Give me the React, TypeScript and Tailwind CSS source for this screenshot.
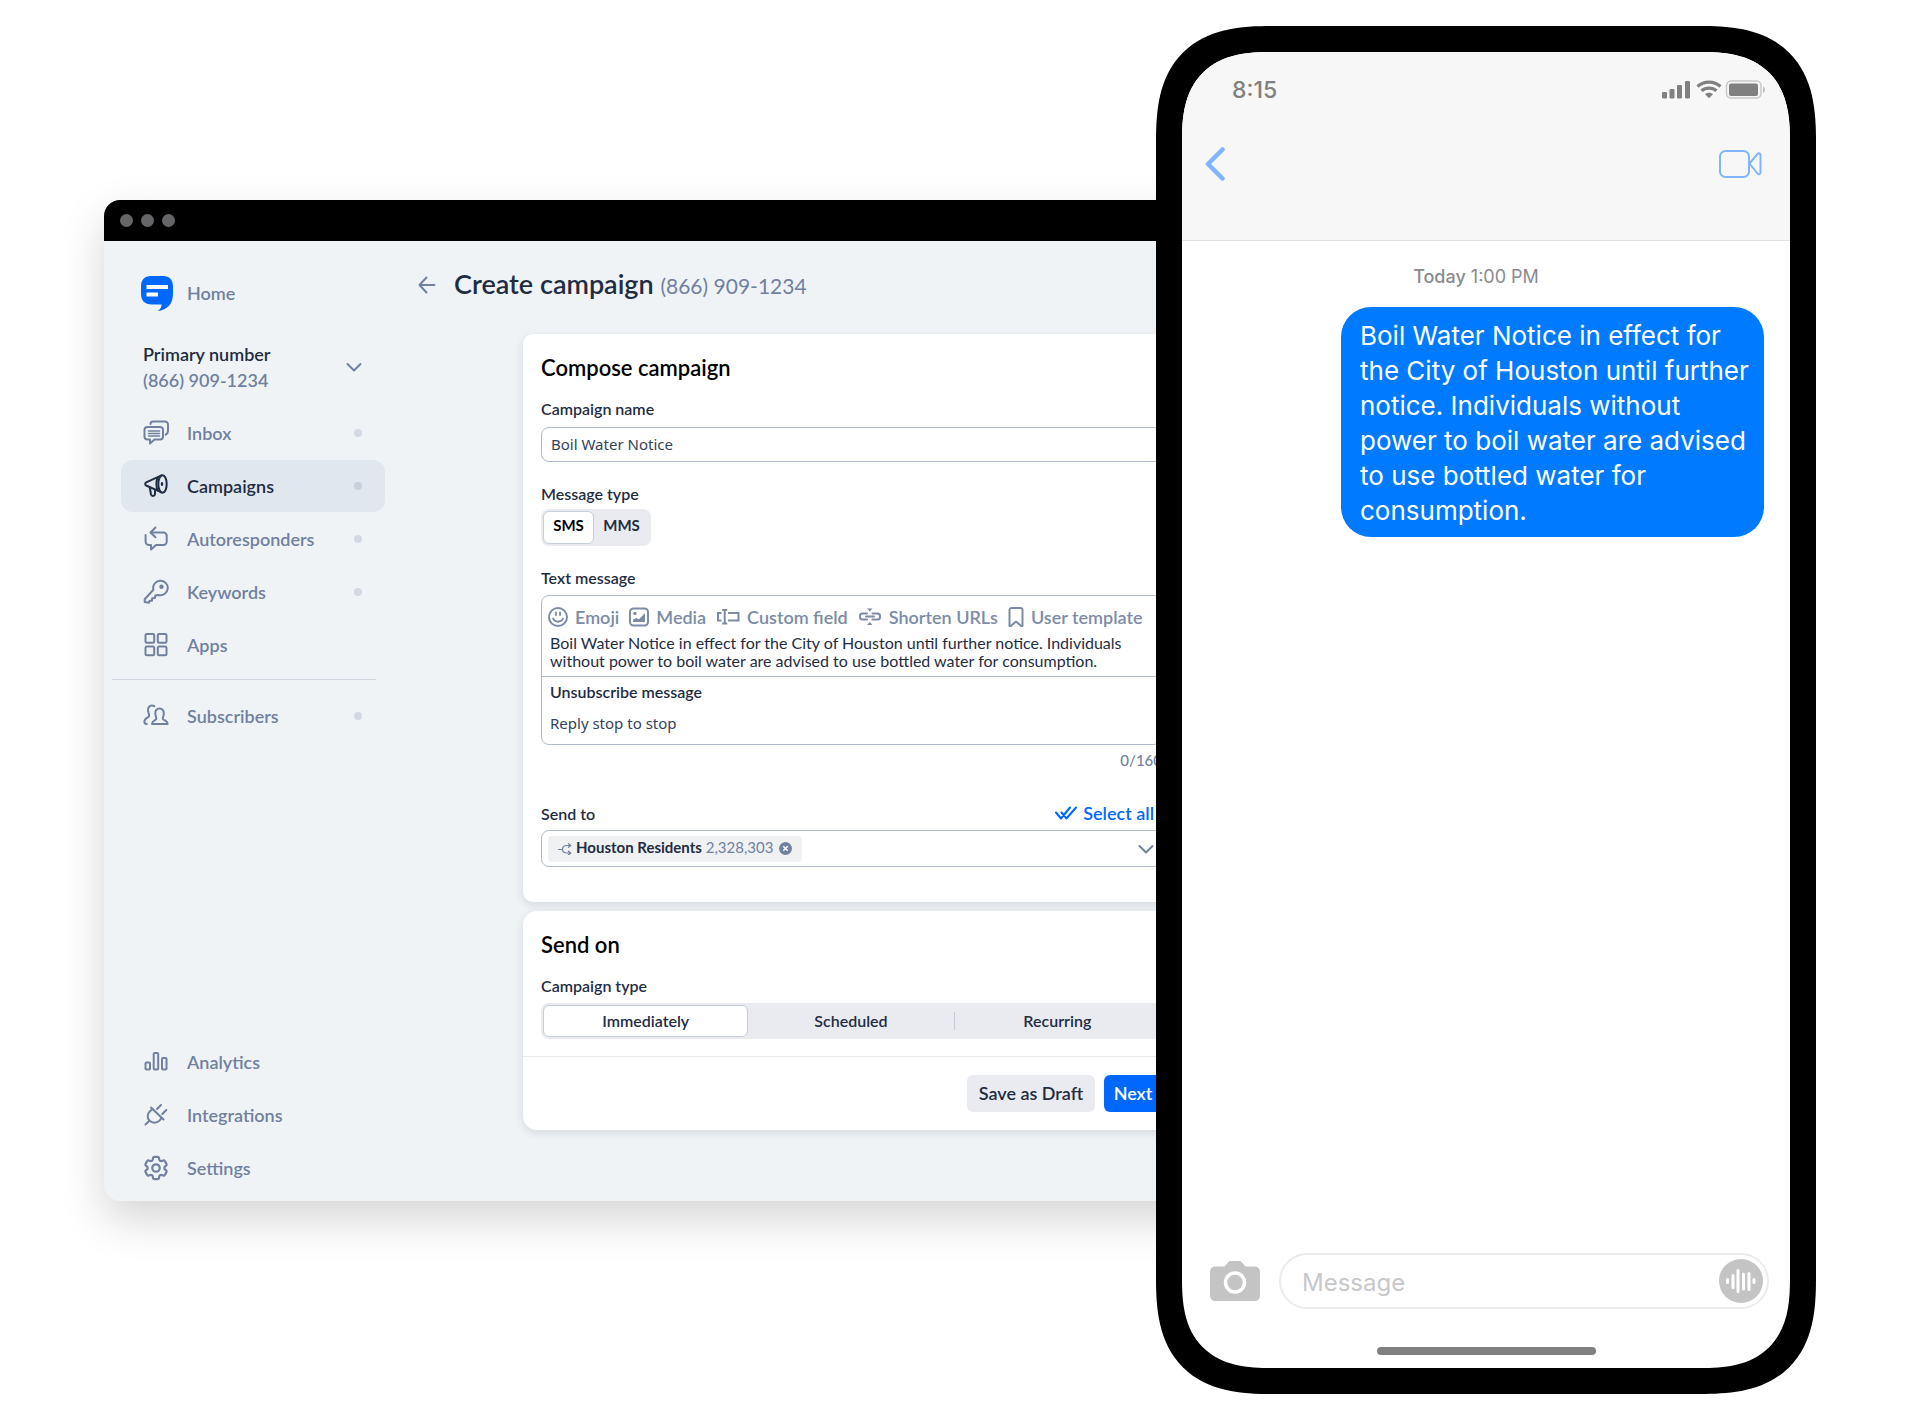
import React, { useState } from 'react';
import { HiOutlineCog6Tooth } from 'react-icons/hi2';

interface IconProps {
    className?: string;
}

interface NavItem {
    label: string;
    icon: React.FC<IconProps>;
    dot?: boolean;
    active?: boolean;
}

const strokeProps = {
    fill: 'none',
    stroke: 'currentColor',
    strokeWidth: 2,
    strokeLinecap: 'round' as const,
    strokeLinejoin: 'round' as const,
};

const LogoIcon: React.FC<IconProps> = ({ className }) => (
    <svg className={className} viewBox="0 0 32 35">
        <path fill="#0068ff" d="M10 0h12c6.500 0 10 3.800 10 10.500v7C32 28 26.500 34 16.500 35c2.800-1.600 4-3.600 4-6.500H11C3.500 28.500 0 24.500 0 17.500v-7C0 3.800 3.500 0 10 0z" />
        <path fill="#fff" d="M5.500 9h21.500v4H5.500zM5.500 16.500h11.500v4H5.500z" />
    </svg>
);

const InboxIcon: React.FC<IconProps> = ({ className }) => (
    <svg className={className} viewBox="0 0 26 26" {...strokeProps}>
        <path d="M7.500 4C7.500 2.500 8.500 1.500 10 1.500h12a3 3 0 0 1 3 3V11c0 1.800-.8 2.800-2.300 3.600" />
        <path d="M4.500 7h12.500a3 3 0 0 1 3 3v6.500a3 3 0 0 1-3 3h-5.500l-4.500 4v-4H4.500a3 3 0 0 1-3-3V10a3 3 0 0 1 3-3z" />
        <path strokeWidth={1.500} d="M5.500 11h11M5.500 13.500h11M5.500 16h11" />
    </svg>
);

const MegaphoneIcon: React.FC<IconProps> = ({ className }) => (
    <svg className={className} viewBox="0 0 26 26" {...strokeProps}>
        <ellipse cx="19.500" cy="11" rx="4.200" ry="8.800" />
        <circle cx="19" cy="11" r="1.300" fill="currentColor" stroke="none" />
        <path d="M19 10v2M18.500 2.300L3.200 9.300c-1.300.7-1.300 2.500 0 3.200l15.300 6.800M14.500 4.800c-1.300 3.600-1.300 8.500 0 12" />
        <path d="M6.800 14.500l1.200 7c.6 2 3.800 1.800 4-.3v-4.400" />
    </svg>
);

const ReplyIcon: React.FC<IconProps> = ({ className }) => (
    <svg className={className} viewBox="0 0 26 26" {...strokeProps}>
        <path d="M12.500 1.500L7.500 6.500l5 4.700" />
        <path d="M8 6.500h12.500a3.200 3.200 0 0 1 3.200 3.200v6a3.200 3.200 0 0 1-3.200 3.200H13L8 23.500v-4.600H5.800a3.200 3.200 0 0 1-3.200-3.200V9" />
    </svg>
);

const KeyIcon: React.FC<IconProps> = ({ className }) => (
    <svg className={className} viewBox="0 0 26 26" {...strokeProps}>
        <path d="M10.400 10.800A7.300 7.300 0 1 1 15.500 16l-3.200.4-.3 2.600-2.800.2-.3 2.600H6.600L6 23.700 1.700 23v-2.700z" />
        <circle cx="18.500" cy="7.800" r="2.200" fill="currentColor" stroke="none" />
    </svg>
);

const AppsIcon: React.FC<IconProps> = ({ className }) => (
    <svg className={className} viewBox="0 0 26 26" {...strokeProps}>
        <rect x="2.500" y="2" width="8.700" height="8.700" rx="1.300" />
        <rect x="14.800" y="2" width="8.700" height="8.700" rx="1.300" />
        <rect x="2.500" y="14.500" width="8.700" height="8.700" rx="1.300" />
        <rect x="14.800" y="14.500" width="8.700" height="8.700" rx="1.300" />
    </svg>
);

const PeopleIcon: React.FC<IconProps> = ({ className }) => (
    <svg className={className} viewBox="0 0 26 26" {...strokeProps}>
        <path d="M16.500 5.500c-2.900 0-4.300 2.200-4.200 4.900.1 2.600 1.400 4 .9 5.600-.4 1.400-3.800 1-4.200 4.900h15.600c-.4-3.900-4.300-3.500-4.700-4.900-.4-1.600.9-3 .9-5.600 0-2.700-1.400-4.900-4.300-4.900z" />
        <path d="M11.300 3.200C8.500 1.500 5.100 2.800 5 6.800c-.1 2.700 1.300 4 1.100 6-.2 2.300-4.700 1.600-4.700 6 0 1.500.8 2.200 2.400 2.200" />
    </svg>
);

const AnalyticsIcon: React.FC<IconProps> = ({ className }) => (
    <svg className={className} viewBox="0 0 26 26" {...strokeProps}>
        <rect x="2.500" y="13.500" width="4.500" height="7" rx="1" />
        <rect x="10.700" y="4" width="4.500" height="16.500" rx="1" />
        <rect x="19" y="9" width="4.500" height="11.500" rx="1" />
    </svg>
);

const PlugIcon: React.FC<IconProps> = ({ className }) => (
    <svg className={className} viewBox="0 0 26 26" {...strokeProps}>
        <path d="M2.500 22.500l3.800-3.700M8 5.500l12.500 12M14 7l4-4M19.300 12l4-4" />
        <path d="M9.500 7L7 9.200c-3 2.700-3 6.800-.5 9.400 2.700 2.700 7.200 2.900 10 0l2-2.500" />
    </svg>
);

const GearIcon: React.FC<IconProps> = ({ className }) => <HiOutlineCog6Tooth className={className} strokeWidth={1.8} viewBox="1.500 1.500 21 21" />;

const ChevronDown: React.FC<IconProps> = ({ className }) => (
    <svg className={className} viewBox="0 0 16 16" {...strokeProps}>
        <path d="M1.500 5l6.500 6.500L14.500 5" />
    </svg>
);

const EmojiIcon: React.FC<IconProps> = ({ className }) => (
    <svg className={className} viewBox="0 0 20 20" {...strokeProps}>
        <circle cx="10" cy="10" r="9" />
        <path d="M8 5.500V8M12 5.500V8M5 11.500c1.800 4.300 8.200 4.300 10 0" strokeWidth={1.800} />
    </svg>
);

const MediaIcon: React.FC<IconProps> = ({ className }) => (
    <svg className={className} viewBox="0 0 20 20" {...strokeProps}>
        <rect x="1" y="1.500" width="18" height="17" rx="3.500" />
        <circle cx="6" cy="6.500" r="1.700" fill="currentColor" stroke="none" />
        <path d="M4 15v-2.200l3-1.800 3 1.200L16 6v9z" fill="currentColor" stroke="none" />
    </svg>
);

const FieldIcon: React.FC<IconProps> = ({ className }) => (
    <svg className={className} viewBox="0 0 24 20" {...strokeProps} strokeLinecap="butt" strokeLinejoin="miter">
        <path d="M5.500 6H2v7.500h3.500M12 6h10.500v7.500H12M6.200 3h5M6.200 16.500h5M8.700 3v13.500" />
    </svg>
);

const ShortenIcon: React.FC<IconProps> = ({ className }) => (
    <svg className={className} viewBox="0 0 24 20" {...strokeProps}>
        <path d="M9 6.500H4.500a2.500 2.500 0 0 0-2.500 2.500v1a2.500 2.500 0 0 0 2.500 2.500H9M14.500 6.500h5A2.500 2.500 0 0 1 22 9v1a2.500 2.500 0 0 1-2.500 2.500h-5M8 9.500h8" />
        <path d="M9 1.500h5.500l-2.700 3zM9 18h5.500l-2.700-3z" fill="currentColor" stroke="none" />
    </svg>
);

const BookmarkIcon: React.FC<IconProps> = ({ className }) => (
    <svg className={className} viewBox="0 0 16 20" {...strokeProps}>
        <path d="M1.500 3a2 2 0 0 1 2-2h9a2 2 0 0 1 2 2v16h-1.300L8 14.500 2.800 19H1.500z" />
    </svg>
);

const primaryNav: NavItem[] = [
    { label: 'Inbox', icon: InboxIcon, dot: true },
    { label: 'Campaigns', icon: MegaphoneIcon, dot: true, active: true },
    { label: 'Autoresponders', icon: ReplyIcon, dot: true },
    { label: 'Keywords', icon: KeyIcon, dot: true },
    { label: 'Apps', icon: AppsIcon },
];

const secondaryNav: NavItem[] = [{ label: 'Subscribers', icon: PeopleIcon, dot: true }];

const bottomNav: NavItem[] = [
    { label: 'Analytics', icon: AnalyticsIcon },
    { label: 'Integrations', icon: PlugIcon },
    { label: 'Settings', icon: GearIcon },
];

const tools = [
    { label: 'Emoji', icon: <EmojiIcon className="w-5 h-5" /> },
    { label: 'Media', icon: <MediaIcon className="w-5 h-5" /> },
    { label: 'Custom field', icon: <FieldIcon className="w-6 h-5" /> },
    { label: 'Shorten URLs', icon: <ShortenIcon className="w-6 h-5" /> },
    { label: 'User template', icon: <BookmarkIcon className="w-4 h-5" /> },
];

const NavList: React.FC<{ items: NavItem[] }> = ({ items }) => (
    <ul className="flex flex-col gap-px">
        {items.map(({ label, icon: Icon, dot, active }) => (
            <li key={label}>
                <a
                    href="#"
                    className={`flex items-center h-[52px] rounded-xl pl-[22px] pr-[23px] text-[18px] font-semibold ${active ? 'bg-[#e0e7ee] text-[#1f2d43]' : 'text-[#70819f]'}`}
                >
                    <Icon className="w-[26px] h-[26px] mr-[18px] shrink-0" />
                    <span className="flex-1">{label}</span>
                    {dot && <span className={`w-2 h-2 rounded-full ${active ? 'bg-[#c8d0dc]' : 'bg-[#d3d9e3]'}`} />}
                </a>
            </li>
        ))}
    </ul>
);

const Sidebar: React.FC = () => (
    <nav className="w-[296px] shrink-0 flex flex-col pl-[17px] pr-[15px] pt-[34px] pb-[7px]">
        <a href="#" className="flex items-center h-9 pl-5 gap-[14px] text-[18px] font-semibold text-[#70819f]">
            <LogoIcon className="w-8 h-[35px]" />
            Home
        </a>
        <button className="flex items-center justify-between text-left mt-[30px] mb-[14px] pl-[22px] pr-[23px] text-[18px] leading-[26px] font-semibold">
            <span>
                <span className="block text-[#1f2d43]">Primary number</span>
                <span className="block text-[#70819f]">(866) 909-1234</span>
            </span>
            <ChevronDown className="w-4 h-4 text-[#70819f]" />
        </button>
        <NavList items={primaryNav} />
        <hr className="mt-2 mb-[10px] -ml-[9px] mr-[9px] border-[#d0d6df]" />
        <NavList items={secondaryNav} />
        <div className="mt-auto">
            <NavList items={bottomNav} />
        </div>
    </nav>
);

const labelClass = 'block text-[16px] leading-5 font-semibold text-[#1f2d43]';

const ComposeCard: React.FC = () => {
    const [type, setType] = useState('SMS');

    return (
        <section className="bg-white rounded-[10px] px-[18px] pt-5 pb-[35px] shadow-[0_3px_8px_rgba(31,45,67,0.12)]">
            <h2 className="text-[22px] leading-7 font-semibold text-black">Compose campaign</h2>

            <label htmlFor="name" className={`mt-[17px] ${labelClass}`}>Campaign name</label>
            <input
                id="name"
                defaultValue="Boil Water Notice"
                className="block w-full h-[35px] mt-2 px-[9px] pb-0.5 rounded-lg border border-[#b0bccd] font-['Noto_Sans',sans-serif] text-[15px] text-[#34435a]"
            />

            <p className={`mt-[22px] ${labelClass}`}>Message type</p>
            <div className="inline-flex mt-[5px] p-0.5 h-[37px] rounded-lg bg-[#eaebf0] align-top">
                {['SMS', 'MMS'].map((item) => (
                    <button
                        key={item}
                        aria-pressed={type === item}
                        onClick={() => setType(item)}
                        className={`px-2 pb-1 rounded-md text-[15px] font-bold ${type === item ? 'w-[51px] bg-white border border-[#c5cedb] text-black' : 'w-[55px] text-[#1f2d43]'}`}
                    >
                        {item}
                    </button>
                ))}
            </div>

            <label htmlFor="message" className={`mt-[22px] ${labelClass}`}>Text message</label>
            <div className="mt-[7px] rounded-lg border border-[#b0bccd]">
                <div className="flex items-center gap-[10px] h-6 mt-[9px] px-1.5">
                    {tools.map(({ label, icon }) => (
                        <button key={label} className="flex items-center gap-[7px] whitespace-nowrap text-[18px] font-semibold text-[#7c8ba6]">
                            {icon}
                            {label}
                        </button>
                    ))}
                </div>
                <textarea
                    id="message"
                    rows={2}
                    defaultValue="Boil Water Notice in effect for the City of Houston until further notice. Individuals without power to boil water are advised to use bottled water for consumption."
                    className="block w-full mt-[5px] pl-2 pr-6 resize-none overflow-hidden text-[16px] leading-[18px] text-[#1f2d43]"
                />
                <div className="mt-[6px] pt-[5px] pb-[10px] px-2 border-t border-[#b0bccd]">
                    <label htmlFor="unsubscribe" className={labelClass}>Unsubscribe message</label>
                    <input
                        id="unsubscribe"
                        defaultValue="Reply stop to stop"
                        className="block w-full h-5 mt-3 pb-0.5 font-['Noto_Sans',sans-serif] text-[15px] text-[#34435a]"
                    />
                </div>
            </div>
            <p className="mt-[5px] text-right text-[15px] leading-5 font-medium text-[#70819f]">0/160</p>

            <div className="flex items-center justify-between mt-[34px] pr-2">
                <span className={labelClass}>Send to</span>
                <button className="flex items-center gap-1.5 h-5 pb-0.5 text-[18px] font-semibold text-[#0068ff]">
                    <svg className="w-[22px] h-[14px]" viewBox="0 0 22 14" {...strokeProps}>
                        <path d="M1 6.500l5 6L15 1.500M6.500 6.500l5 6L21 1.500" />
                    </svg>
                    Select all
                </button>
            </div>
            <div className="flex items-center h-[37px] mt-1.5 pl-1.5 pr-[7px] rounded-lg border border-[#b0bccd]">
                <span className="flex items-center h-[26px] px-[10px] rounded bg-[#f0f1f3] text-[15px] text-[#70819f]">
                    <svg className="w-[14px] h-3 mr-1" viewBox="0 0 14 12" fill="none" stroke="currentColor" strokeWidth={1.200} strokeLinecap="round">
                        <path d="M.5 6.500h4M12.500 2.500H9c-3 0-4.500 1.500-4.500 4S6 10 9 10h3.500M10.500.7l2.200 1.800-2.200 1.800M10.500 8.200l2.200 1.800-2.200 1.800" />
                    </svg>
                    <span className="pb-[3px]">
                        <b className="font-bold text-[#1f2d43]">Houston Residents</b> 2,328,303
                    </span>
                    <button aria-label="Remove Houston Residents" className="ml-1.5">
                        <svg className="w-[13px] h-[13px]" viewBox="0 0 13 13">
                            <circle cx="6.500" cy="6.500" r="6.500" fill="currentColor" />
                            <path d="M4.300 4.300l4.400 4.400M8.700 4.300L4.300 8.700" stroke="#fff" strokeWidth={1.600} />
                        </svg>
                    </button>
                </span>
                <button aria-label="Choose recipients" className="ml-auto text-[#70819f]">
                    <ChevronDown className="w-4 h-4" />
                </button>
            </div>
        </section>
    );
};

const SendCard: React.FC = () => {
    const [active, setActive] = useState('Immediately');

    return (
        <section className="bg-white rounded-[14px] pt-5 shadow-[0_3px_8px_rgba(31,45,67,0.12)]">
            <div className="px-[18px]">
                <h2 className="text-[22px] leading-7 font-semibold text-black">Send on</h2>
                <p className={`mt-[17px] ${labelClass}`}>Campaign type</p>
                <div className="flex items-center mt-[7px] h-9 p-0.5 rounded-lg bg-[#eaebf0]">
                    {['Immediately', 'Scheduled', 'Recurring'].map((item) => (
                        <React.Fragment key={item}>
                            {item === 'Recurring' && <span className="w-px h-[18px] bg-[#c5cad6]" />}
                            <button
                                aria-pressed={active === item}
                                onClick={() => setActive(item)}
                                className={`flex-1 h-8 rounded-md text-[16px] font-semibold text-[#1f2d43] border ${active === item ? 'bg-white border-[#c5cedb]' : 'border-transparent'}`}
                            >
                                {item}
                            </button>
                        </React.Fragment>
                    ))}
                </div>
            </div>
            <div className="flex justify-end gap-[9px] mt-[17px] px-[18px] py-[18px] border-t border-[#e6e9ee] text-[18px] font-semibold">
                <button className="w-[128px] h-[37px] rounded-md bg-[#eaebf0] text-[#1f2d43]">Save as Draft</button>
                <button className="w-[58px] h-[37px] rounded-md bg-[#0068ff] text-white">Next</button>
            </div>
        </section>
    );
};

const BrowserWindow: React.FC = () => (
    <div className="flex-1 min-w-0 mt-[174px] rounded-2xl overflow-hidden bg-[#eff3f6] font-[Lato,sans-serif] shadow-[0_18px_44px_rgba(0,0,0,0.17)]">
        <div className="flex items-center gap-2 h-[41px] pl-4 bg-black">
            <span className="w-[13px] h-[13px] rounded-full bg-[#666668]" />
            <span className="w-[13px] h-[13px] rounded-full bg-[#666668]" />
            <span className="w-[13px] h-[13px] rounded-full bg-[#666668]" />
        </div>
        <div className="flex">
            <Sidebar />
            <main className="flex-1 min-w-0 pt-7 pb-[71px]">
                <header className="flex items-center h-8 pl-[18px]">
                    <button aria-label="Back" className="mr-[18px] text-[#70819f]">
                        <svg className="w-[18px] h-[18px]" viewBox="0 0 18 18" {...strokeProps}>
                            <path d="M8.500 1.500L1.500 9l7 7.500M2 9h14.500" />
                        </svg>
                    </button>
                    <h1 className="text-[27px] leading-8 font-semibold text-[#1f2d43]">
                        Create campaign <span className="text-[21px] font-normal text-[#70819f]">(866) 909-1234</span>
                    </h1>
                </header>
                <div className="flex flex-col gap-[9px] mt-[33px] mx-[123px]">
                    <ComposeCard />
                    <SendCard />
                </div>
            </main>
        </div>
    </div>
);

const StatusIcons: React.FC = () => (
    <svg className="w-[104px] h-5" viewBox="0 0 104 20" fill="#808080">
        <rect x="0" y="12" width="5" height="6.500" rx="1.300" />
        <rect x="7.500" y="9" width="5" height="9.500" rx="1.300" />
        <rect x="15" y="5" width="5" height="13.500" rx="1.300" />
        <rect x="23" y="1" width="5" height="17.500" rx="1.300" />
        <g fill="none" stroke="#808080" strokeWidth="3.200">
            <path d="M35.500 6.500c6.500-5.800 16.500-5.800 23 0" />
            <path d="M39.500 10.800c4.300-3.700 10.700-3.700 15 0" />
        </g>
        <path d="M43 14.300c2.400-2 5.600-2 8 0l-4 4z" />
        <rect x="64.500" y="1" width="34.500" height="17" rx="4.500" fill="none" stroke="#c9c9c9" strokeWidth="1.500" />
        <rect x="67" y="3.500" width="29" height="12.500" rx="2" />
        <path d="M101 6.500c2.700 1 2.700 5.500 0 6.500z" fill="#c0c0c0" />
    </svg>
);

const Phone: React.FC = () => (
    <div className="relative z-10 shrink-0 w-[660px] min-h-[1368px] -ml-[147px] p-[26px] flex bg-black rounded-[116px] [corner-shape:superellipse(1.4)] font-[Inter,sans-serif]">
        <div className="flex-1 flex flex-col bg-white overflow-hidden rounded-[90px] [corner-shape:superellipse(1.4)]">
            <header className="h-[189px] bg-[#f7f7f7] border-b border-[#e0e0e0]">
                <div className="flex items-center justify-between pt-[22px] pl-[50px] pr-6">
                    <span className="text-[23px] leading-8 font-medium text-[#808080]">8:15</span>
                    <StatusIcons />
                </div>
                <div className="flex items-center justify-between h-[34px] mt-[41px] pl-[23px] pr-7 text-[#7fb5ff]">
                    <button aria-label="Back">
                        <svg className="w-5 h-[34px]" viewBox="0 0 20 34" {...strokeProps} strokeWidth={4.500}>
                            <path d="M17.500 2.500L3 17l14.500 14.500" />
                        </svg>
                    </button>
                    <button aria-label="Video call">
                        <svg className="w-[43px] h-7" viewBox="0 0 43 28" {...strokeProps}>
                            <rect x="1" y="1" width="29" height="26" rx="5.500" />
                            <path d="M30.500 13.500l8-9.500c1.300-1.200 3-.5 3 1v17.500c0 1.500-1.700 2.300-3 1z" />
                        </svg>
                    </button>
                </div>
            </header>

            <div className="flex-1 px-[26px] pt-[23px]">
                <p className="pr-6 pl-1 text-center text-[18px] leading-[26px] text-[#8a8a8e]">
                    <span className="font-medium">Today</span> 1:00 PM
                </p>
                <p className="w-[423px] mt-[17px] ml-auto pl-[19px] pr-3 pt-[11px] pb-[9px] rounded-[30px] bg-[#007aff] text-white text-[26px] leading-[35px]">
                    Boil Water Notice in effect for the City of Houston until further notice. Individuals without power to boil water are advised to use bottled water for consumption.
                </p>
            </div>

            <footer className="px-[21px] pb-[13px]">
                <div className="flex items-center pl-[7px]">
                    <button aria-label="Camera">
                        <svg className="w-[50px] h-10" viewBox="0 0 50 40">
                            <path fill="#c4c4c4" d="M6 5.500h8.500l3.500-4C19 .3 20 0 21.500 0h7c1.500 0 2.500.3 3.500 1.500l3.500 4H44c4 0 6 2 6 6V34c0 4-2 6-6 6H6c-4 0-6-2-6-6V11.500c0-4 2-6 6-6z" />
                            <circle cx="25" cy="21.500" r="9.500" fill="none" stroke="#fff" strokeWidth="3.500" />
                        </svg>
                    </button>
                    <div className="flex-1 flex items-center h-14 ml-[19px] pl-[21px] pr-1 rounded-full border-2 border-[#ececec]">
                        <input aria-label="Message" placeholder="Message" className="flex-1 min-w-0 pt-1 text-[24px] outline-none placeholder:text-[#c8c8cb]" />
                        <button aria-label="Record audio">
                            <svg className="w-11 h-11" viewBox="0 0 44 44">
                                <circle cx="22" cy="22" r="22" fill="#c4c4c4" />
                                <path d="M8.500 20.500v3M14 16.500v12M19 11.500v21M24.500 15v15M30 14.500v16M35 20.500v3" stroke="#fff" strokeWidth="3" strokeLinecap="round" />
                            </svg>
                        </button>
                    </div>
                </div>
                <div className="w-[219px] h-2 mt-[38px] mx-auto rounded-full bg-[#808080]" />
            </footer>
        </div>
    </div>
);

const App: React.FC = () => (
    <div className="flex items-start min-h-screen px-[104px] py-[26px] bg-white">
        <BrowserWindow />
        <Phone />
    </div>
);

export default App;
